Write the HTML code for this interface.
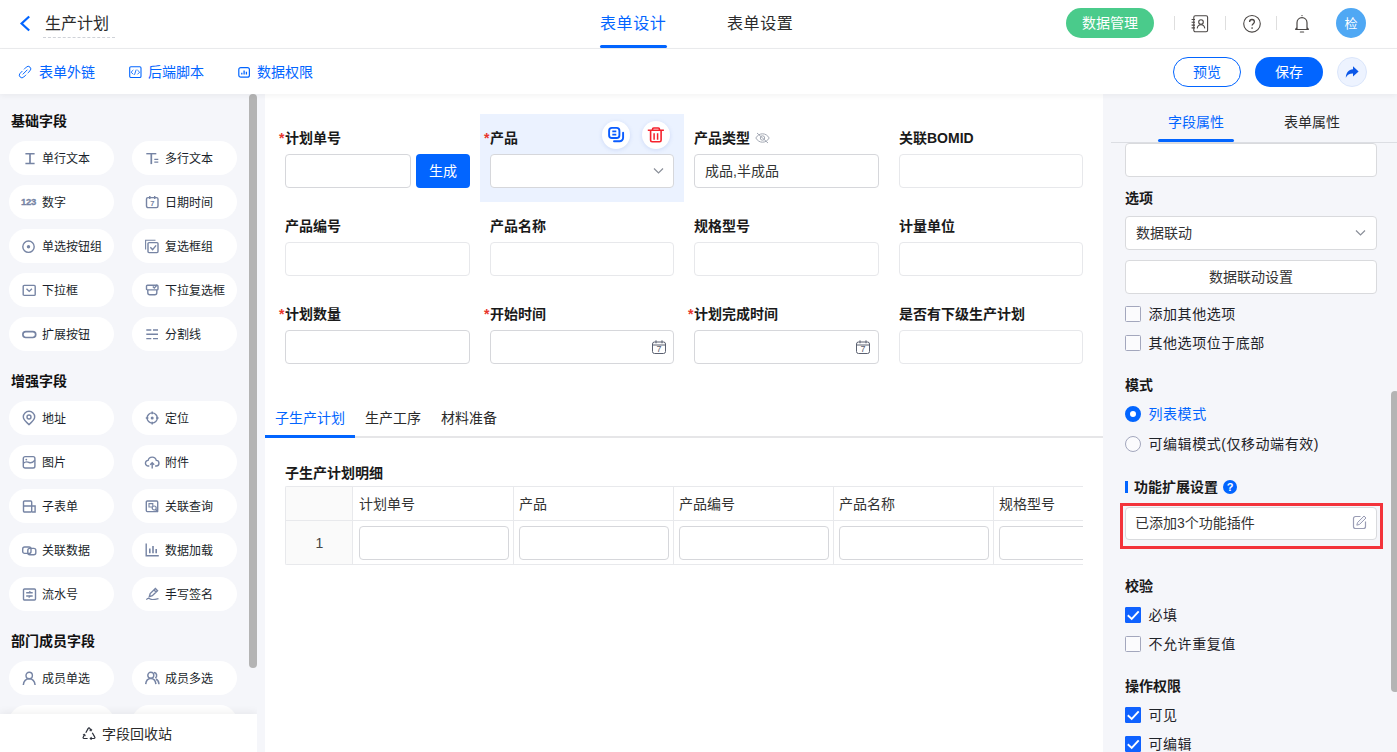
<!DOCTYPE html>
<html lang="zh-CN">
<head>
<meta charset="utf-8">
<title>生产计划 - 表单设计</title>
<style>
*{box-sizing:border-box;margin:0;padding:0}
html,body{width:1397px;height:752px;overflow:hidden;background:#f5f6fa;}
body{font-family:"Liberation Sans","Noto Sans CJK SC",sans-serif;font-size:14px;color:#1f2329;position:relative}
.abs{position:absolute}
svg{display:block}
/* header */
#hdr{position:absolute;left:0;top:0;width:1397px;height:49px;background:#fff;border-bottom:1px solid #ebecee}
#tb{position:absolute;left:0;top:49px;width:1397px;height:45px;background:#fff;box-shadow:0 2px 6px rgba(0,0,0,.05);z-index:5}
.t{position:absolute;white-space:nowrap;line-height:20px}
.blue{color:#0265ff}
/* left */
#left{position:absolute;left:0;top:94px;width:257px;height:658px;background:#f5f6fa;overflow:hidden}
.sec{position:absolute;left:11px;font-weight:bold;font-size:14px;line-height:20px;color:#111}
.pill{position:absolute;width:105px;height:34px;border-radius:17px;background:#fff;font-size:12px;line-height:34px;color:#1a1f2b;white-space:nowrap}
.pill span{position:absolute;left:33px;top:1px}
.pill svg{position:absolute;left:13px;top:10px;width:14px;height:14px;stroke:#7684a4;fill:none;stroke-width:1.4;overflow:visible}
.c1{left:9px}.c2{left:132px}
#foot{position:absolute;left:0;top:620px;width:257px;height:38px;background:#fff;box-shadow:0 -2px 8px rgba(0,0,0,.06)}
/* center */
#canvas{position:absolute;left:265px;top:94px;width:838px;height:658px;background:#fff;overflow:hidden}
.lab{position:absolute;font-weight:bold;font-size:14px;line-height:20px;color:#1a1a1a;white-space:nowrap}
.req{position:absolute;color:#e8352b;font-weight:bold;font-size:14px;line-height:20px}
.inp{position:absolute;height:34px;width:185px;border:1px solid #d6d7db;border-radius:4px;background:#fff}
.inp.ro{border-color:#e7e8eb}
/* right */
#right{position:absolute;left:1103px;top:94px;width:294px;height:658px;background:#f5f6fa;overflow:hidden}
.rl{position:absolute;left:22px;font-weight:bold;font-size:14px;line-height:20px;color:#1a1a1a;white-space:nowrap}
.rt{position:absolute;left:45.500px;font-size:14px;line-height:20px;color:#1f2329;white-space:nowrap;letter-spacing:.55px}
.cb{position:absolute;left:22px;width:16px;height:16px;border:1px solid #a3a7bd;border-radius:1.500px;background:#fbfbfd}
.cb.on{background:#0f62ff;border-color:#0f62ff;border-radius:1px}
.rinp{position:absolute;left:22px;width:252px;height:34px;border:1px solid #d9dadd;border-radius:4px;background:#fff}
</style>
</head>
<body>
<div id="hdr">
<svg class="abs" style="left:19px;top:15px" width="12" height="17" viewBox="0 0 12 17"><path d="M10.2 1.5 L2.6 8.5 L10.2 15.5" fill="none" stroke="#0265ff" stroke-width="2.2" stroke-linejoin="miter"/></svg>
<div class="t" style="left:45px;top:13px;font-size:16px;line-height:22px;color:#2b2b2b">生产计划</div>
<div class="abs" style="left:43px;top:37px;width:72px;height:0;border-top:1px dashed #cfd2d8"></div>
<div class="t blue" style="left:600px;top:13px;font-size:16px;line-height:22px;letter-spacing:.6px">表单设计</div>
<div class="abs" style="left:600px;top:45px;width:67px;height:3px;border-radius:2px;background:#0265ff"></div>
<div class="t" style="left:727px;top:13px;font-size:16px;line-height:22px;letter-spacing:.6px;color:#2b2b2b">表单设置</div>
<div class="abs" style="left:1066px;top:8px;width:88px;height:30px;border-radius:15px;background:#4acb8b;color:#fff;font-size:14px;line-height:30px;text-align:center">数据管理</div>
<div class="abs" style="left:1174px;top:16px;width:1px;height:14px;background:#dedede"></div>
<div class="abs" style="left:1225px;top:16px;width:1px;height:14px;background:#dedede"></div>
<div class="abs" style="left:1276px;top:16px;width:1px;height:14px;background:#dedede"></div>
<svg class="abs" style="left:1190px;top:14px" width="20" height="20" viewBox="0 0 20 20" fill="none" stroke="#4a4644" stroke-width="1.100"><rect x="3.800" y="1.800" width="13.800" height="16" rx="1.500"/><path d="M1.600 5.500h3.400M1.600 8.300h3.400M1.600 11.100h3.400M1.600 13.900h3.400"/><circle cx="11" cy="8" r="2.300"/><path d="M7.200 14.300c.4-2.300 1.900-3.500 3.800-3.500s3.400 1.200 3.800 3.500"/></svg>
<svg class="abs" style="left:1242px;top:14px" width="20" height="20" viewBox="0 0 20 20" fill="none" stroke="#4a4644" stroke-width="1.100"><circle cx="10" cy="9.800" r="8.300"/><path d="M7.600 8c0-1.500 1-2.500 2.400-2.500s2.400 1 2.400 2.300c0 1.800-2.300 1.900-2.300 3.800" stroke-width="1.300"/><circle cx="10.100" cy="14" r=".85" fill="#4a4644" stroke="none"/></svg>
<svg class="abs" style="left:1292px;top:13px" width="20" height="22" viewBox="0 0 20 22" fill="none" stroke="#4a4644" stroke-width="1.200"><path d="M3.200 16.500h13.600M5 16.500V9.800c0-3 2.200-5.200 5-5.200s5 2.200 5 5.200v6.700M4.900 14.500l-1.500 2M15.100 14.500l1.500 2"/><circle cx="10" cy="2.600" r=".7" fill="#4a4644" stroke="none"/><path d="M8.400 19h3.200" stroke-linecap="round"/></svg>
<div class="abs" style="left:1336px;top:8px;width:30px;height:30px;border-radius:15px;background:#4fa8f4;color:#fff;font-size:13px;line-height:32px;text-align:center">检</div>
</div>
<div id="tb">
<svg class="abs" style="left:18px;top:16px" width="14" height="14" viewBox="0 0 14 14" fill="none" stroke="#0265ff" stroke-width=".95" stroke-linecap="round"><path d="M6.300 4.100L8.300 2.100a2.600 2.600 0 0 1 3.700 3.700L10 7.800"/><path d="M7.800 10L5.800 12a2.600 2.600 0 0 1-3.700-3.700L4.100 6.300"/><path d="M5 9.100L9.100 5"/></svg>
<div class="t blue" style="left:39px;top:13px">表单外链</div>
<svg class="abs" style="left:128px;top:16px" width="14" height="13" viewBox="0 0 14 13" fill="none" stroke="#0265ff" stroke-width="1.100"><rect x="1.700" y="1.700" width="11.300" height="10.800" rx="1.200"/><path d="M5.300 5l-2.200 2.200 2.200 2.200M9.400 5l2.200 2.200-2.200 2.200M8.200 4.600L6.500 9.800" stroke-width=".9"/></svg>
<div class="t blue" style="left:148px;top:13px">后端脚本</div>
<svg class="abs" style="left:237px;top:17px" width="14" height="12" viewBox="0 0 14 12" fill="none" stroke="#0265ff" stroke-width="1.200"><rect x="1.800" y="1.600" width="10.600" height="9.600" rx="2"/><path d="M4.800 8.600V6.800M7.100 8.600V4.600M9.400 8.600V5.800" stroke-width="1.300"/></svg>
<div class="t blue" style="left:257px;top:13px">数据权限</div>
<div class="abs blue" style="left:1173px;top:8px;width:68px;height:30px;border-radius:15px;border:1px solid #0265ff;background:#fff;font-size:14px;line-height:28px;text-align:center">预览</div>
<div class="abs" style="left:1255px;top:8px;width:68px;height:30px;border-radius:15px;background:#0265ff;color:#fff;font-size:14px;line-height:30px;text-align:center">保存</div>
<div class="abs" style="left:1337px;top:8px;width:30px;height:30px;border-radius:15px;background:#edf3ff;border:1px solid #dbe6fb"></div>
<svg class="abs" style="left:1344px;top:15px" width="16" height="16" viewBox="0 0 16 16"><path d="M9 2.200l5.600 5.200L9 12.600V9.600C5.600 9.500 3.400 10.800 1.800 13.800 2 9 4.600 5.600 9 5.300z" fill="#0b57e8"/></svg>
</div>
<div id="left">
<div class="sec" style="top:17px">基础字段</div>
<div class="pill c1" style="top:47px"><svg viewBox="0 0 14 14"><path d="M3.400 2.700h9.200M3.400 12.500h9.200"/><path d="M8 2.700v9.800" stroke-width="1.700"/></svg><span>单行文本</span></div>
<div class="pill c2" style="top:47px"><svg viewBox="0 0 14 14"><path d="M1.300 2.700h10"/><path d="M6.300 2.700v10.400" stroke-width="1.700"/><path d="M9.300 8.300h4M9.300 11.200h4" stroke-width="1.200"/></svg><span>多行文本</span></div>
<div class="pill c1" style="top:91px"><b style="position:absolute;left:12px;top:0;font-size:9.500px;letter-spacing:-.3px;-webkit-text-stroke:.3px #7684a4;color:#7684a4;font-family:'Liberation Sans',sans-serif">123</b><span>数字</span></div>
<div class="pill c2" style="top:91px"><svg viewBox="0 0 14 14"><rect x="1.500" y="2.600" width="11.500" height="10" rx="1.500"/><path d="M4.800 1v3M9.700 1v3"/><text x="7.300" y="11.300" font-size="7.500" font-weight="bold" text-anchor="middle" fill="#7684a4" stroke="none" font-family="Liberation Sans,sans-serif">7</text></svg><span>日期时间</span></div>
<div class="pill c1" style="top:135px"><svg viewBox="0 0 14 14"><circle cx="6.500" cy="7.700" r="5.700"/><circle cx="6.500" cy="7.700" r="1.700" fill="#7684a4" stroke="none"/></svg><span>单选按钮组</span></div>
<div class="pill c2" style="top:135px"><svg viewBox="0 0 14 14"><path d="M.6 10.500V1.200h9.900" stroke-width="1.100"/><rect x="3" y="3.600" width="10" height="10" rx="1"/><path d="M5.300 8.300l2.300 2.300 3.500-4.200"/></svg><span>复选框组</span></div>
<div class="pill c1" style="top:179px"><svg viewBox="0 0 14 14"><rect x="1.200" y="2.400" width="12" height="10" rx="1"/><path d="M4.500 5.800l2.700 2.600 2.700-2.600"/></svg><span>下拉框</span></div>
<div class="pill c2" style="top:179px"><svg viewBox="0 0 14 14"><rect x="1.500" y="2.300" width="11.500" height="4.600" rx="1"/><path d="M7.800 3.600l1.500 1.500 3-3.300"/><path d="M2.800 7v2.800a2 2 0 0 0 2 2h5a2 2 0 0 0 2-2V7"/></svg><span>下拉复选框</span></div>
<div class="pill c1" style="top:223px"><svg viewBox="0 0 14 14"><rect x=".9" y="4.700" width="12.800" height="5.800" rx="2.900" stroke-width="1.700"/></svg><span>扩展按钮</span></div>
<div class="pill c2" style="top:223px"><svg viewBox="0 0 14 14"><path d="M1.300 3h5M8 3h5M1.300 7.300h11.700M1.300 11.600h5M8 11.600h5"/></svg><span>分割线</span></div>
<div class="sec" style="top:277px">增强字段</div>
<div class="pill c1" style="top:307px"><svg viewBox="0 0 14 14"><path d="M7 13.600C3.300 10.400 1.300 8.300 1.300 6a5.700 5.700 0 0 1 11.400 0C12.700 8.300 10.700 10.400 7 13.600z"/><circle cx="7" cy="6" r="2"/></svg><span>地址</span></div>
<div class="pill c2" style="top:307px"><svg viewBox="0 0 14 14"><circle cx="7.200" cy="7" r="5.100"/><circle cx="7.200" cy="7" r="1.500" fill="#7684a4" stroke="none"/><path d="M7.200 .6v2.600M7.200 10.800v2.600M.8 7h2.600M11 7h2.600"/></svg><span>定位</span></div>
<div class="pill c1" style="top:351px"><svg viewBox="0 0 14 14"><rect x="1.300" y="1.600" width="11.600" height="11.400" rx="1.800"/><path d="M1.300 8.300c2.500-2.300 4.500-1.500 6-.8 1.700.7 3.500 0 5.600-2.300"/><circle cx="4.300" cy="4.600" r=".9" fill="#7684a4" stroke="none"/></svg><span>图片</span></div>
<div class="pill c2" style="top:351px"><svg viewBox="0 0 14 14"><path d="M4.300 11h-.9a2.800 2.800 0 0 1-.3-5.600 4.200 4.200 0 0 1 8.200 0 2.800 2.800 0 0 1-.3 5.600h-.9"/><path d="M7.200 13.400V8M5.200 9.800l2-2 2 2"/></svg><span>附件</span></div>
<div class="pill c1" style="top:395px"><svg viewBox="0 0 14 14"><rect x="1.500" y="2" width="8.200" height="11" rx="1"/><path d="M1.500 7h8.200M9.700 7h3.400v6H9.700"/></svg><span>子表单</span></div>
<div class="pill c2" style="top:395px"><svg viewBox="0 0 14 14"><rect x="1.300" y="2" width="11.400" height="10.600" rx="1"/><path d="M4 4.600h3.800v3.400h-3.800z" stroke-width="1.100"/><circle cx="9.200" cy="9" r="2" stroke-width="1.200" fill="#fff"/><path d="M10.700 10.500l2.300 2.500"/></svg><span>关联查询</span></div>
<div class="pill c1" style="top:439px"><svg viewBox="0 0 14 14"><rect x=".7" y="4" width="8.300" height="6.400" rx="2"/><rect x="5.800" y="5.400" width="8" height="6.400" rx="2"/></svg><span>关联数据</span></div>
<div class="pill c2" style="top:439px"><svg viewBox="0 0 14 14"><path d="M1.200 .600v12.200h12.600"/><path d="M4.800 10.300V5.500M8 10.300V3M11.200 10.300V6" stroke-width="1.600"/></svg><span>数据加载</span></div>
<div class="pill c1" style="top:483px"><svg viewBox="0 0 14 14"><rect x="1.500" y="2" width="12" height="11" rx="1"/><path d="M4.200 5.800h6.500M4.200 9h6.500"/><path d="M8.300 4.200L6.700 5.800M6.700 10.600L8.300 9" stroke-width="1.200"/></svg><span>流水号</span></div>
<div class="pill c2" style="top:483px"><svg viewBox="0 0 14 14"><path d="M4.300 9.600l.9-3 5.200-5 2.100 2.100-5.200 5zM9 3l2.100 2.100"/><path d="M1.300 12.600c1.500-1.500 2.800-1.500 4-.6s3 .8 8.200-.4" stroke-width="1.200"/></svg><span>手写签名</span></div>
<div class="sec" style="top:537px">部门成员字段</div>
<div class="pill c1" style="top:567px"><svg viewBox="0 0 14 14"><circle cx="7.200" cy="4.500" r="3.200"/><path d="M1.300 14c.5-3.800 2.700-6.200 5.900-6.200s5.400 2.400 5.900 6.200" stroke-width="1.500"/></svg><span>成员单选</span></div>
<div class="pill c2" style="top:567px"><svg viewBox="0 0 14 14"><circle cx="5.800" cy="4.300" r="3"/><path d="M.7 13.200c.4-3.500 2.300-5.700 5.100-5.700s4.700 2.200 5.100 5.700" stroke-width="1.500"/><path d="M9 1.500a3 3 0 0 1 1.300 5.500M11 8c1.700.9 2.800 2.700 3 5.200" stroke-width="1.500"/></svg><span>成员多选</span></div>
<div class="pill c1" style="top:611px"><svg viewBox="0 0 14 14"><rect x="2" y="2" width="10" height="10"/></svg><span>部门单选</span></div>
<div class="pill c2" style="top:611px"><svg viewBox="0 0 14 14"><rect x="2" y="2" width="10" height="10"/></svg><span>部门多选</span></div>
<div class="abs" style="left:249px;top:0;width:8px;height:574px;border-radius:4px;background:#b4b4b4"></div>
<div id="foot"><svg class="abs" style="left:82px;top:12px" width="14" height="14" viewBox="0 0 14 14" fill="none" stroke="#2b2f3a" stroke-width="1.200" stroke-linejoin="round"><path d="M3.800 6.800L6.200 2.400a.9.900 0 0 1 1.600 0L8.800 4.200"/><path d="M10.300 6.800l2.500 4.300a.9.900 0 0 1-.8 1.400H8.200"/><path d="M5.600 12.500H2a.9.900 0 0 1-.8-1.400L2.300 9.200"/><path d="M7.600 4.600l1.900.5.300-2zM9.400 10.900l-1.600 1.600 1.600 1.400zM.9 8.600l1.900-.6.600 2z" fill="#2b2f3a" stroke-width=".5"/></svg><div class="t" style="left:102px;top:10px;font-size:14px;color:#2b2b2b">字段回收站</div></div>
</div>
<div id="canvas">
<div class="abs" style="left:215px;top:20px;width:204px;height:88px;background:#ebf2ff"></div>
<div class="req" style="left:14px;top:34px">*</div>
<div class="lab" style="left:20px;top:34px">计划单号</div>
<div class="inp" style="left:20px;top:60px;width:126px"></div>
<div class="abs" style="left:151px;top:60px;width:54px;height:34px;border-radius:4px;background:#0265ff;color:#fff;font-size:14px;line-height:34px;text-align:center">生成</div>
<div class="req" style="left:219px;top:34px">*</div>
<div class="lab" style="left:225px;top:34px">产品</div>
<div class="inp" style="left:225px;top:60px;width:184px"></div>
<svg class="abs" style="left:388px;top:73px" width="11" height="8" viewBox="0 0 11 8" fill="none" stroke="#8a8f99" stroke-width="1.200"><path d="M1 1.500l4.500 4.500 4.500-4.500"/></svg>
<div class="abs" style="left:337px;top:27px;width:28px;height:28px;border-radius:14px;background:#fff;box-shadow:0 1px 4px rgba(40,90,200,.15)"></div>
<div class="abs" style="left:377px;top:27px;width:28px;height:28px;border-radius:14px;background:#fff;box-shadow:0 1px 4px rgba(40,90,200,.15)"></div>
<svg class="abs" style="left:337px;top:27px" width="28" height="28" viewBox="0 0 28 28" fill="none" stroke="#0a5cff" stroke-width="1.900" stroke-linecap="round"><rect x="7.100" y="6.900" width="10.300" height="10.100" rx="2.800"/><path d="M10.300 10.300h4M10.300 13.600h4" stroke-width="1.700" stroke-linecap="butt"/><path d="M21.100 11.800V16.800a3.500 3.500 0 0 1-3.500 3.500H12"/></svg>
<svg class="abs" style="left:377px;top:27px" width="28" height="28" viewBox="0 0 28 28" fill="none" stroke="#f5222d" stroke-width="1.600"><path d="M5.800 9.300h16.100M10.500 9.300V8.200a1.200 1.200 0 0 1 1.200-1.200h4.600a1.200 1.200 0 0 1 1.200 1.200V9.300M8.600 9.300V19.300a1.500 1.500 0 0 0 1.500 1.500h7.500a1.500 1.500 0 0 0 1.500-1.500V9.300"/><path d="M12.100 12.200v6.600M15.600 12.200v6.600" stroke-width="1.500"/></svg>
<div class="lab" style="left:429px;top:34px">产品类型</div>
<div class="inp" style="left:429px;top:60px;width:185px"></div>
<svg class="abs" style="left:490px;top:38px" width="15" height="12" viewBox="0 0 15 12" fill="none" stroke="#a3a8b3" stroke-width="1"><path d="M.8 6C2.500 3.200 4.800 1.800 7.500 1.800S12.500 3.200 14.200 6C12.500 8.800 10.200 10.200 7.500 10.200S2.500 8.800.8 6z"/><circle cx="7.500" cy="6" r="2.200"/><path d="M2 1l11 10"/></svg>
<div class="t" style="left:440px;top:67px;color:#333">成品,半成品</div>
<div class="lab" style="left:634px;top:34px">关联BOMID</div>
<div class="inp ro" style="left:634px;top:60px;width:184px"></div>
<div class="lab" style="left:20px;top:122px">产品编号</div>
<div class="inp ro" style="left:20px;top:148px;width:185px"></div>
<div class="lab" style="left:225px;top:122px">产品名称</div>
<div class="inp ro" style="left:225px;top:148px;width:184px"></div>
<div class="lab" style="left:429px;top:122px">规格型号</div>
<div class="inp ro" style="left:429px;top:148px;width:185px"></div>
<div class="lab" style="left:634px;top:122px">计量单位</div>
<div class="inp ro" style="left:634px;top:148px;width:184px"></div>
<div class="req" style="left:14px;top:210px">*</div>
<div class="lab" style="left:20px;top:210px">计划数量</div>
<div class="inp" style="left:20px;top:236px;width:185px"></div>
<div class="req" style="left:219px;top:210px">*</div>
<div class="lab" style="left:225px;top:210px">开始时间</div>
<div class="inp" style="left:225px;top:236px;width:184px"></div>
<svg class="abs" style="left:387px;top:246px" width="14" height="14" viewBox="0 0 14 14" fill="none" stroke="#5a6070" stroke-width="1"><rect x=".5" y="2" width="13" height="11.500" rx="2"/><path d="M.5 5h13M4 .3v3M10 .3v3"/><text x="7" y="12.200" font-size="9" text-anchor="middle" fill="#5a6070" stroke="none" font-family="Liberation Sans,sans-serif">7</text></svg>
<div class="req" style="left:423px;top:210px">*</div>
<div class="lab" style="left:429px;top:210px">计划完成时间</div>
<div class="inp" style="left:429px;top:236px;width:185px"></div>
<svg class="abs" style="left:591px;top:246px" width="14" height="14" viewBox="0 0 14 14" fill="none" stroke="#5a6070" stroke-width="1"><rect x=".5" y="2" width="13" height="11.500" rx="2"/><path d="M.5 5h13M4 .3v3M10 .3v3"/><text x="7" y="12.200" font-size="9" text-anchor="middle" fill="#5a6070" stroke="none" font-family="Liberation Sans,sans-serif">7</text></svg>
<div class="lab" style="left:634px;top:210px">是否有下级生产计划</div>
<div class="inp ro" style="left:634px;top:236px;width:184px"></div>
<div class="abs" style="left:0;top:342px;width:838px;height:2px;background:#e6e6e8"></div>
<div class="abs" style="left:0;top:341px;width:90px;height:3px;background:#0265ff"></div>
<div class="t blue" style="left:10px;top:314px">子生产计划</div>
<div class="t" style="left:100px;top:314px;color:#2b2b2b">生产工序</div>
<div class="t" style="left:176px;top:314px;color:#2b2b2b">材料准备</div>
<div class="lab" style="left:20px;top:369px">子生产计划明细</div>
<div class="abs" style="left:20px;top:392px;width:798px;height:79px;overflow:hidden;border:1px solid #e8e9ec;border-right:none;border-radius:2px 0 0 2px">
<div class="abs" style="left:0;top:0;width:67px;height:79px;background:#fafafa;border-right:1px solid #e8e9ec"></div>
<div class="abs" style="left:0;top:33px;width:900px;height:1px;background:#e8e9ec"></div>
<div class="t" style="left:0;top:46px;width:67px;text-align:center;color:#444;font-size:14px">1</div>
<div class="abs" style="left:227px;top:0;width:1px;height:79px;background:#e8e9ec"></div>
<div class="t" style="left:73px;top:7px;color:#333">计划单号</div>
<div class="inp" style="left:73px;top:39px;width:150px"></div>
<div class="abs" style="left:387px;top:0;width:1px;height:79px;background:#e8e9ec"></div>
<div class="t" style="left:233px;top:7px;color:#333">产品</div>
<div class="inp" style="left:233px;top:39px;width:150px"></div>
<div class="abs" style="left:547px;top:0;width:1px;height:79px;background:#e8e9ec"></div>
<div class="t" style="left:393px;top:7px;color:#333">产品编号</div>
<div class="inp" style="left:393px;top:39px;width:150px"></div>
<div class="abs" style="left:707px;top:0;width:1px;height:79px;background:#e8e9ec"></div>
<div class="t" style="left:553px;top:7px;color:#333">产品名称</div>
<div class="inp" style="left:553px;top:39px;width:150px"></div>
<div class="abs" style="left:867px;top:0;width:1px;height:79px;background:#e8e9ec"></div>
<div class="t" style="left:713px;top:7px;color:#333">规格型号</div>
<div class="inp" style="left:713px;top:39px;width:150px"></div>
<div class="abs" style="left:1027px;top:0;width:1px;height:79px;background:#e8e9ec"></div>
<div class="t" style="left:873px;top:7px;color:#333"></div>
<div class="inp" style="left:873px;top:39px;width:150px"></div>
</div>
</div>
<div id="right">
<div class="abs" style="left:8px;top:48px;width:286px;height:1px;background:#dcdee3;z-index:3"></div>
<div class="abs" style="left:55px;top:45px;width:76px;height:3px;border-radius:1.500px;background:#0265ff;z-index:4"></div>
<div class="t blue" style="left:65px;top:18px">字段属性</div>
<div class="t" style="left:181px;top:18px;color:#2b2b2b">表单属性</div>
<div class="abs" style="left:0;top:48px;width:294px;height:610px;overflow:hidden">
<div class="rinp" style="top:1px;height:34px"></div>
<div class="rl" style="top:46px">选项</div>
<div class="rinp" style="top:74px"></div>
<div class="t" style="left:33px;top:81px;color:#333">数据联动</div>
<svg class="abs" style="left:252px;top:87px" width="11" height="8" viewBox="0 0 11 8" fill="none" stroke="#8a8f99" stroke-width="1.200"><path d="M1 1.500l4.500 4.500 4.500-4.500"/></svg>
<div class="rinp" style="top:118px;text-align:center;line-height:32px;color:#333">数据联动设置</div>
<div class="cb" style="top:164px"></div><div class="rt" style="top:162px">添加其他选项</div>
<div class="cb" style="top:193px"></div><div class="rt" style="top:191px">其他选项位于底部</div>
<div class="rl" style="top:233px">模式</div>
<div class="abs" style="left:22px;top:264px;width:16px;height:16px;border-radius:8px;border:5px solid #0265ff;background:#fff"></div>
<div class="rt" style="top:262px;color:#0265ff">列表模式</div>
<div class="abs" style="left:22px;top:294px;width:16px;height:16px;border-radius:8px;border:1px solid #a3a7bd;background:#fbfbfd"></div>
<div class="rt" style="top:292px">可编辑模式(仅移动端有效)</div>
<div class="abs" style="left:22px;top:339px;width:3px;height:12px;background:#0265ff"></div>
<div class="rl" style="left:31px;top:335px">功能扩展设置</div>
<div class="abs" style="left:120px;top:338px;width:14px;height:14px;border-radius:7px;background:#0265ff;color:#fff;font-size:11px;font-weight:bold;line-height:14px;text-align:center;font-family:'Liberation Sans',sans-serif">?</div>
<div class="abs" style="left:17px;top:361px;width:263px;height:46px;border:3px solid #f3333b"></div>
<div class="rinp" style="top:365px;height:33px"></div>
<div class="t" style="left:32px;top:371px;color:#333">已添加3个功能插件</div>
<svg class="abs" style="left:249px;top:373px" width="15" height="15" viewBox="0 0 15 15" fill="none" stroke="#9a9db5" stroke-width="1.200"><path d="M8.500 1.500H3.500a2 2 0 0 0-2 2v8a2 2 0 0 0 2 2h8a2 2 0 0 0 2-2V6.500"/><path d="M4.800 10.200l.8-2.800 6.400-6.400 2 2-6.400 6.400z" stroke-width="1" fill="#f5f6fa"/></svg>
<div class="rl" style="top:434px">校验</div>
<div class="cb on" style="top:465px"></div><svg class="abs" style="left:23px;top:466px" width="14" height="14" viewBox="0 0 14 14" fill="none" stroke="#fff" stroke-width="2"><path d="M1.800 7.300l3.900 3.600 7-7.600" stroke-width="1.900"/></svg><div class="rt" style="top:463px">必填</div>
<div class="cb" style="top:494px"></div><div class="rt" style="top:492px">不允许重复值</div>
<div class="rl" style="top:534px">操作权限</div>
<div class="cb on" style="top:565px"></div><svg class="abs" style="left:23px;top:566px" width="14" height="14" viewBox="0 0 14 14" fill="none" stroke="#fff" stroke-width="2"><path d="M1.800 7.300l3.900 3.600 7-7.600" stroke-width="1.900"/></svg><div class="rt" style="top:563px">可见</div>
<div class="cb on" style="top:594px"></div><svg class="abs" style="left:23px;top:595px" width="14" height="14" viewBox="0 0 14 14" fill="none" stroke="#fff" stroke-width="2"><path d="M1.800 7.300l3.900 3.600 7-7.600" stroke-width="1.900"/></svg><div class="rt" style="top:592px">可编辑</div>
</div>
<div class="abs" style="left:288px;top:297px;width:8px;height:301px;border-radius:4px;background:#b4b4b4"></div>
</div>
</body>
</html>
